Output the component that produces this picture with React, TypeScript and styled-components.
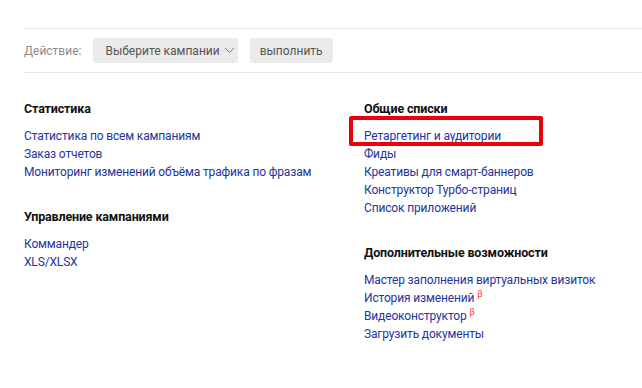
import React from "react";
import styled, { createGlobalStyle } from "styled-components";

const GlobalStyle = createGlobalStyle`
  body {
    margin: 0;
    background: #fff;
    font-family: Roboto, "Noto Sans", sans-serif;
  }
`;

const Page = styled.div`
  padding: 28px 0 0 24px;
`;

const Toolbar = styled.div`
  display: flex;
  align-items: center;
  gap: 12px;
  height: 43px;
  border-top: 1px solid #e6e6e6;
  border-bottom: 1px solid #e6e6e6;
  font-size: 12px;
`;

const Label = styled.span`
  color: #8c8c8c;
`;

const Button = styled.button<{ $left: number; $right: number }>`
  display: inline-flex;
  align-items: center;
  gap: 4px;
  height: 25px;
  padding: 0 ${(p) => p.$right}px 0 ${(p) => p.$left}px;
  border: none;
  border-radius: 3px;
  background: #ebebeb;
  color: #555;
  font-family: inherit;
  font-size: inherit;
`;

const Columns = styled.div`
  display: grid;
  grid-template-columns: 340px 1fr;
  padding-top: 26px;
`;

const Column = styled.div`
  display: flex;
  flex-direction: column;
  gap: 26px;
`;

const Section = styled.div`
  display: flex;
  flex-direction: column;
`;

const Heading = styled.div`
  font-size: 12.5px;
  font-weight: 700;
  letter-spacing: -0.15px;
  line-height: 20px;
  color: #111;
  margin-bottom: 8px;
`;

const LinkRow = styled.div`
  position: relative;
  font-size: 12px;
  letter-spacing: -0.15px;
  line-height: 18px;
`;

const Link = styled.a`
  color: #21359e;
  text-decoration: none;
`;

const Beta = styled.sup`
  font-size: 9px;
  color: #ff3b3b;
  margin-left: 3px;
  vertical-align: 5px;
  line-height: 0;
`;

const Highlight = styled.div`
  position: absolute;
  left: -15px;
  top: -11px;
  width: 194px;
  height: 30px;
  box-sizing: border-box;
  border: 4px solid #e8000b;
  border-radius: 2px;
  pointer-events: none;
`;

type Item = { text: string; beta?: boolean; marked?: boolean };

const Block = ({ title, items }: { title: string; items: Item[] }) => (
  <Section>
    <Heading>{title}</Heading>
    {items.map((it) => (
      <LinkRow key={it.text}>
        <Link href="#">{it.text}</Link>
        {it.beta && <Beta>β</Beta>}
        {it.marked && <Highlight />}
      </LinkRow>
    ))}
  </Section>
);

const Chevron = () => (
  <svg width="11" height="7" viewBox="0 0 11 7">
    <path d="M1 1l4.5 4.5L10 1" fill="none" stroke="#777" strokeWidth="1" />
  </svg>
);

const App = () => (
  <>
    <GlobalStyle />
    <Page>
      <Toolbar>
        <Label>Действие:</Label>
        <Button $left={12} $right={3}>
          Выберите кампании <Chevron />
        </Button>
        <Button $left={10} $right={10}>
          выполнить
        </Button>
      </Toolbar>
      <Columns>
        <Column>
          <Block
            title="Статистика"
            items={[
              { text: "Статистика по всем кампаниям" },
              { text: "Заказ отчетов" },
              { text: "Мониторинг изменений объёма трафика по фразам" },
            ]}
          />
          <Block
            title="Управление кампаниями"
            items={[{ text: "Коммандер" }, { text: "XLS/XLSX" }]}
          />
        </Column>
        <Column>
          <Block
            title="Общие списки"
            items={[
              { text: "Ретаргетинг и аудитории", marked: true },
              { text: "Фиды" },
              { text: "Креативы для смарт-баннеров" },
              { text: "Конструктор Турбо-страниц" },
              { text: "Список приложений" },
            ]}
          />
          <Block
            title="Дополнительные возможности"
            items={[
              { text: "Мастер заполнения виртуальных визиток" },
              { text: "История изменений", beta: true },
              { text: "Видеоконструктор", beta: true },
              { text: "Загрузить документы" },
            ]}
          />
        </Column>
      </Columns>
    </Page>
  </>
);

export default App;
